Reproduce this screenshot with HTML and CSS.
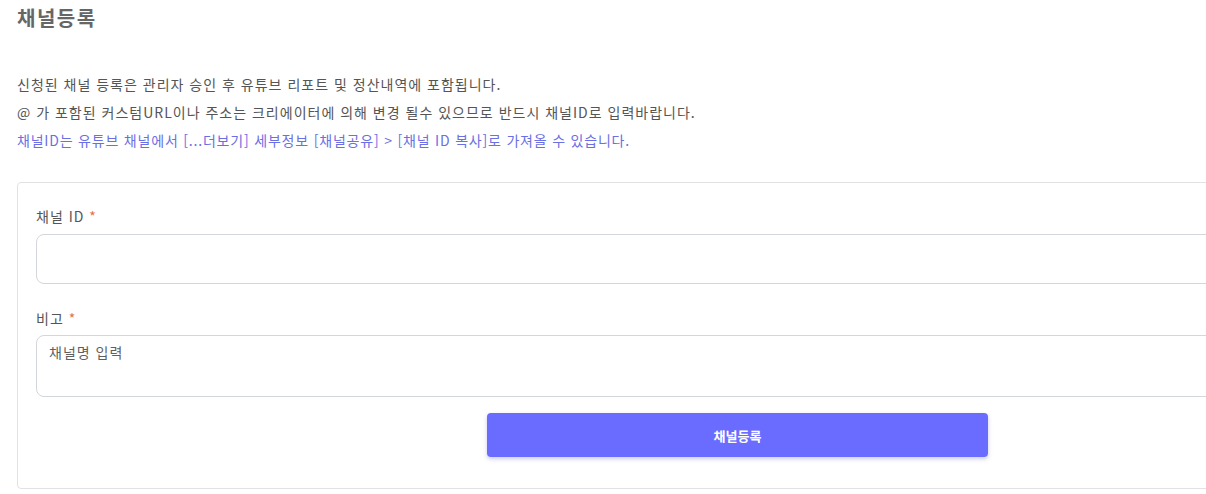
FILE: index.html
```html
<!DOCTYPE html>
<html lang="ko">
<head>
<meta charset="utf-8">
<link rel="stylesheet" href="styles.css">
</head>
<body>
<div class="viewport">
<div class="page">
  <h1 class="title">채널등록</h1>
  <div class="notice">
    <p>신청된 채널 등록은 관리자 승인 후 유튜브 리포트 및 정산내역에 포함됩니다.</p>
    <p>@ 가 포함된 커스텀URL이나 주소는 크리에이터에 의해 변경 될수 있으므로 반드시 채널ID로 입력바랍니다.</p>
    <p class="hint">채널ID는 유튜브 채널에서 [...더보기] 세부정보 [채널공유] &gt; [채널 ID 복사]로 가져올 수 있습니다.</p>
  </div>
  <form class="card">
    <label class="label">채널 ID <span class="req">*</span></label>
    <input class="input" type="text">
    <label class="label label2">비고 <span class="req">*</span></label>
    <textarea class="textarea" placeholder="채널명 입력"></textarea>
    <button type="button" class="btn">채널등록</button>
  </form>
</div>
</div>
</body>
</html>
```

FILE: styles.css
```css
html, body {
  margin: 0;
  padding: 0;
  background: #fff;
}
body {
  font-family: "Noto Sans CJK KR", "Noto Sans", sans-serif;
  color: #555;
}
.viewport {
  width: 1206px;
  height: 494px;
  overflow: hidden;
}
.page {
  padding: 0 17px;
  width: 1441px;
}
.title {
  margin: 0;
  padding-top: 5px;
  font-size: 20px;
  line-height: 26px;
  font-weight: 700;
  letter-spacing: 1.5px;
  color: #666;
}
.notice {
  margin-top: 39px;
  font-size: 14px;
  letter-spacing: 1px;
  color: #555;
}
.notice p {
  margin: 0;
  line-height: 28px;
}
.notice .hint {
  color: #6b6fe4;
  letter-spacing: 0.8px;
}
.card {
  margin-top: 28px;
  border: 1px solid #e2e2e2;
  border-radius: 4px;
  padding: 23px 18px 31px;
  display: flex;
  flex-direction: column;
}
.label {
  font-size: 14px;
  line-height: 20px;
  letter-spacing: 1px;
  color: #555;
}
.label2 {
  margin-top: 24px;
}
.req {
  color: #e8713c;
}
.input, .textarea {
  box-sizing: border-box;
  border: 1px solid #d3d6db;
  border-radius: 8px;
  background: #fff;
  font-family: inherit;
  font-size: 14px;
  letter-spacing: 1px;
  outline: none;
}
.input {
  margin-top: 8px;
  height: 50px;
}
.textarea {
  margin-top: 7px;
  height: 62px;
  resize: none;
  padding: 6px 12px;
  color: #555;
}
.textarea::placeholder {
  color: #5f5f5f;
}
.btn {
  align-self: center;
  margin-top: 16px;
  width: 501px;
  height: 44px;
  border: none;
  border-radius: 4px;
  background: #6a6cff;
  color: #fff;
  font-family: inherit;
  font-size: 13px;
  font-weight: 700;
  box-shadow: 0 2px 4px rgba(80, 80, 200, 0.3);
}
```
